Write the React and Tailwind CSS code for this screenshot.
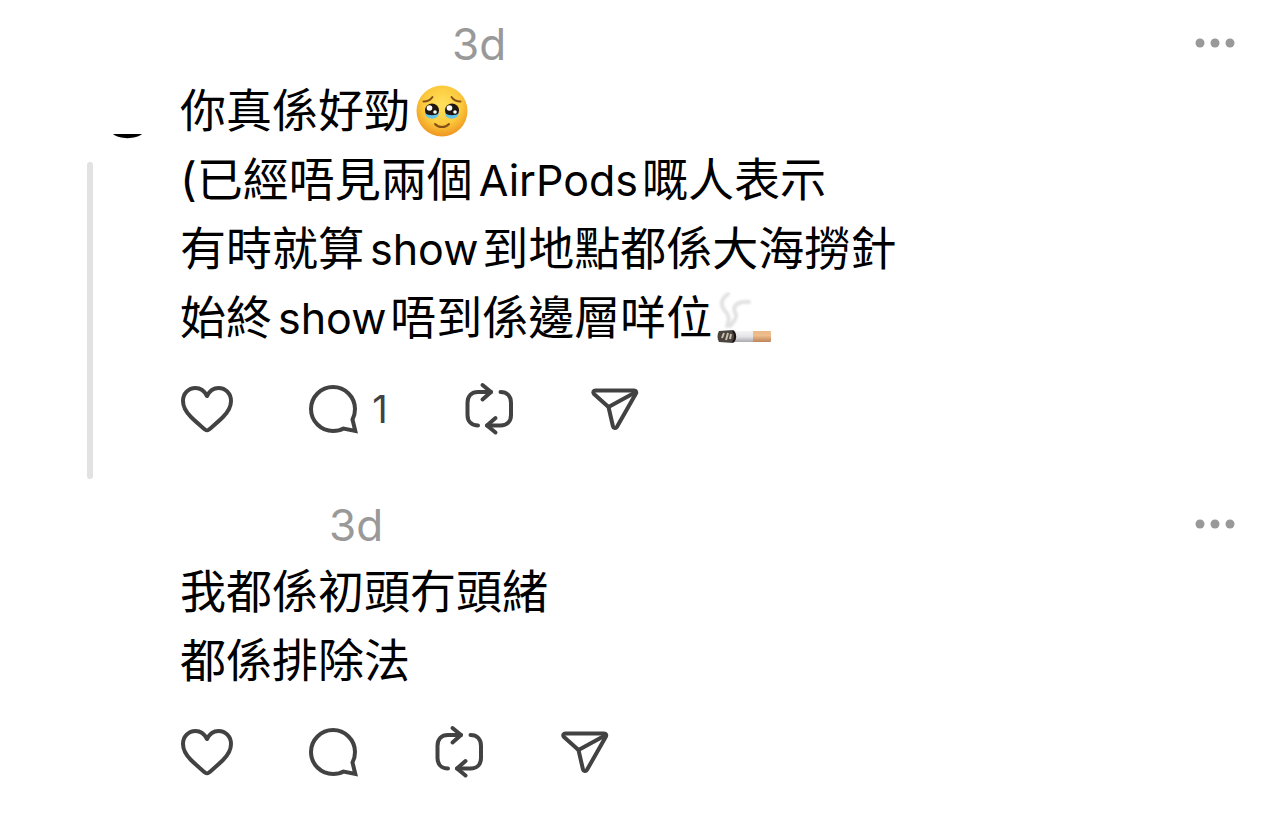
import React from "react";

const HeartIcon = () => (
  <svg width="54" height="50" viewBox="0 0 54 50" fill="none" stroke="currentColor" strokeWidth="4" strokeLinejoin="round">
    <path d="M27 12C24.5 7 20.5 4 15.5 4C8.5 4 3 9.500 3 17C3 23.500 6 28 11 33C16 38 21 42 25 45.500C26.500 46.600 27.500 46.600 29 45.500C33 42 38 38 43 33C48 28 51 23.500 51 17C51 9.500 45.500 4 38.500 4C33.500 4 29.500 7 27 12Z" />
  </svg>
);

const CommentIcon = () => (
  <svg width="50" height="50" viewBox="0 0 50 50" fill="none" stroke="currentColor" strokeWidth="4" strokeLinejoin="miter">
    <path d="M43.500 35.500C45.300 32.300 46 28.800 46 25C46 12.900 36.100 3 24 3S2 12.900 2 25S11.900 47 24 47C28 47 31.500 46.300 34.500 44.500L46.300 47Z" />
  </svg>
);

const RepostIcon = () => (
  <svg className="overflow-visible" width="50" height="50" viewBox="0 0 50 50" fill="none" stroke="currentColor" strokeWidth="4" strokeLinecap="round" strokeLinejoin="round">
    <path d="M14 41.500C7.500 41.500 3.500 37.500 3.500 31V19C3.500 12 7.500 8 14 8H27" />
    <path d="M18.500 1L27 8L18.500 15.500" />
    <path d="M36.500 8C43 8 47 12 47 19V31C47 37.500 43 41.500 36.500 41.500H23" />
    <path d="M31.500 34L23 41.500L31.500 48.500" />
  </svg>
);

const ShareIcon = () => (
  <svg width="54" height="50" viewBox="0 0 54 50" fill="none" stroke="currentColor" strokeWidth="4" strokeLinecap="round" strokeLinejoin="round">
    <path d="M6.500 6.500H45C47 6.500 47.800 8 46.800 9.800L28 42.800C26.800 44.800 24.500 44.300 24 42.500L19.500 23L5 10C3.500 8.500 4.500 6.500 6.500 6.500Z" />
    <path d="M19.500 23L46 8.500" />
  </svg>
);

// 🥹
const TearyFace = () => (
  <svg className="mb-1.5 ml-1.5 inline-block align-middle" width="52" height="52" viewBox="0 0 52 52" role="img" aria-label="face holding back tears">
    <defs>
      <radialGradient id="face" cx="0.5" cy="0.38" r="0.63">
        <stop offset="0" stopColor="#ffe25e" />
        <stop offset="0.6" stopColor="#fcc93c" />
        <stop offset="1" stopColor="#ee941f" />
      </radialGradient>
    </defs>
    <circle cx="26" cy="26" r="25.500" fill="url(#face)" />
    <path d="M7.500 16.500C11 16.500 14.500 15 16.500 12M44.500 16.500C41 16.500 37.500 15 35.500 12" fill="none" stroke="#84501a" strokeWidth="2" strokeLinecap="round" />
    <ellipse cx="16" cy="25.500" rx="7" ry="7" fill="#1d1611" />
    <ellipse cx="36" cy="25.500" rx="7" ry="7" fill="#1d1611" />
    <path d="M9 28C12 31 20 31 23 28C22.500 35.500 10 35.500 9 28Z" fill="#5fc3ea" />
    <path d="M43 28C40 31 32 31 29 28C29.500 35.500 42 35.500 43 28Z" fill="#5fc3ea" />
    <circle cx="13.500" cy="23" r="2.800" fill="#fff" />
    <circle cx="19" cy="27" r="1.800" fill="#fff" />
    <circle cx="33.500" cy="23" r="2.800" fill="#fff" />
    <circle cx="39" cy="27" r="1.800" fill="#fff" />
    <path d="M19 39C22.500 43 29.500 43 33 39" fill="none" stroke="#84501a" strokeWidth="2" strokeLinecap="round" />
  </svg>
);

// 🚬
const Cigarette = () => (
  <svg className="mb-1.5 ml-1 inline-block align-middle" width="56" height="52" viewBox="0 0 56 52" role="img" aria-label="cigarette">
    <defs>
      <linearGradient id="paper" x1="0" y1="0" x2="0" y2="1">
        <stop offset="0" stopColor="#f4f4f6" />
        <stop offset="0.5" stopColor="#e4e4e8" />
        <stop offset="1" stopColor="#a9a9ae" />
      </linearGradient>
      <linearGradient id="filter" x1="0" y1="0" x2="0" y2="1">
        <stop offset="0" stopColor="#e9b987" />
        <stop offset="0.4" stopColor="#f0bd8c" />
        <stop offset="1" stopColor="#bd835a" />
      </linearGradient>
      <filter id="haze" x="-30%" y="-20%" width="160%" height="140%">
        <feGaussianBlur stdDeviation="1" />
      </filter>
    </defs>
    <g fill="none" stroke="#e2e2e2" strokeLinecap="round" filter="url(#haze)">
      <path d="M12 2C3 9 5 14 10 20C14 25 13 29 11 34" strokeWidth="4" />
      <path d="M33 10C22 9 16 14 19 20C22 26 18 29 14 34" strokeWidth="4" />
    </g>
    <rect x="14" y="39" width="25" height="11" fill="url(#paper)" />
    <rect x="37" y="39" width="18" height="11" rx="1" fill="url(#filter)" />
    <path d="M3 39L17 38C20 42 20 47 17 51L3 50C1 47 1 42 3 39Z" fill="#4a443e" />
    <path d="M6 46L8 41M10 48L12 41M14 47L15 42" fill="none" stroke="#c8bfae" strokeWidth="2" />
    <path d="M17 39C20 42 20 47 17 50" fill="none" stroke="#17120f" strokeWidth="2" />
  </svg>
);

const Latin = ({ children }) => (
  <span className="ml-1.5 mr-1 text-[43px] leading-none">{children}</span>
);

const Post = ({ timeOffset, replies, thread, children }) => (
  <article className="flex pt-4 pb-[47px]">
    <div className="relative w-[180px] shrink-0">
      {thread && (
        <>
          <svg className="absolute left-[111px] top-[118px]" width="33" height="5" viewBox="0 0 33 5" aria-hidden="true">
            <path d="M2 0H31C25 5.500 8 5.500 2 0Z" fill="#000" />
          </svg>
          <div className="absolute -bottom-[45px] left-[87px] top-[146px] w-1.5 rounded-full bg-[#e2e2e2]"></div>
        </>
      )}
    </div>

    <div className="min-w-0 flex-1">
      <header className="flex h-14 items-center justify-between pr-12">
        <time className={`text-[44px] leading-[56px] text-[#999999] ${timeOffset}`}>3d</time>
        <button type="button" aria-label="More" className="text-[#999999]">
          <svg width="42" height="12" viewBox="0 0 42 12" fill="currentColor">
            <circle cx="6" cy="5" r="4.500" />
            <circle cx="21" cy="5" r="4.500" />
            <circle cx="36" cy="5" r="4.500" />
          </svg>
        </button>
      </header>

      <div className="mt-1 text-[46px] leading-[69px] text-black">{children}</div>

      <div className="mt-8 flex h-[50px] items-center gap-[75px] text-[#424242]">
        <button type="button" aria-label="Like">
          <HeartIcon />
        </button>
        <button type="button" aria-label="Reply" className="flex items-center">
          <CommentIcon />
          {replies && <span className="w-[30px] pl-3 text-[38px] leading-[50px]">{replies}</span>}
        </button>
        <button type="button" aria-label="Repost">
          <RepostIcon />
        </button>
        <button type="button" aria-label="Share">
          <ShareIcon />
        </button>
      </div>
    </div>
  </article>
);

const App = () => (
  <main className="min-h-screen bg-white font-['Inter','Noto_Sans_CJK_TC',sans-serif]">
    <Post timeOffset="ml-[272px]" replies="1" thread>
      <p>
        你真係好勁
        <TearyFace />
      </p>
      <p>
        (已經唔見兩個<Latin>AirPods</Latin>嘅人表示
      </p>
      <p>
        有時就算<Latin>show</Latin>到地點都係大海撈針
      </p>
      <p>
        始終<Latin>show</Latin>唔到係邊層咩位
        <Cigarette />
      </p>
    </Post>
    <Post timeOffset="ml-[149px]">
      <p>我都係初頭冇頭緒</p>
      <p>都係排除法</p>
    </Post>
  </main>
);

export default App;
